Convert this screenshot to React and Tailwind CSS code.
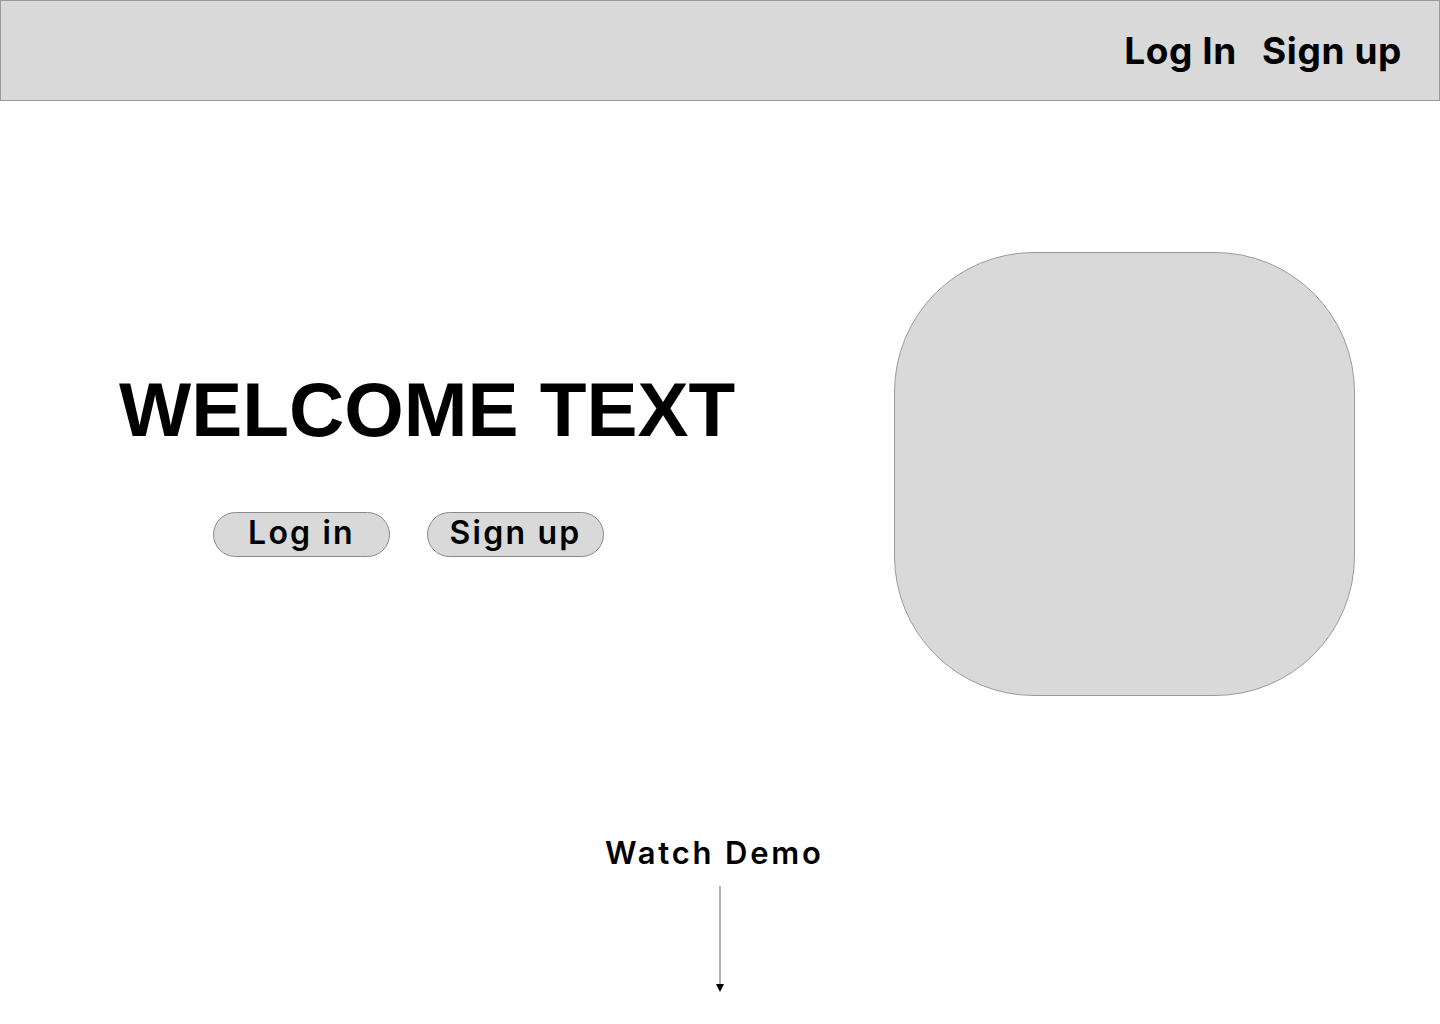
export default function App() {
  return (
    <div className="w-[1440px] h-[1024px] bg-white overflow-hidden">
      <header className="h-[101px] w-full border border-[#9a9a9a] bg-[#d9d9d9] flex items-center justify-end gap-[25px] pr-[37px] font-['Inter',sans-serif] font-bold text-[37px] leading-none text-black tracking-[0.6px]">
        <span>Log In</span>
        <span>Sign up</span>
      </header>
      <div className="flex h-[595px]">
        <div className="flex flex-col pl-[119px] pt-[271px]">
          <h1 className="font-['Liberation_Sans',Arial,sans-serif] font-bold text-[76.5px] leading-none text-black whitespace-nowrap">
            WELCOME TEXT
          </h1>
          <div className="flex gap-[37px] mt-[63px] ml-[94px] font-['Inter',sans-serif] font-semibold text-[32px] leading-none text-black tracking-[2.2px]">
            <button className="w-[177px] h-[45px] rounded-full border border-[#8a8a8a] bg-[#d9d9d9] flex items-center justify-center pb-[3px]">
              Log in
            </button>
            <button className="w-[177px] h-[45px] rounded-full border border-[#8a8a8a] bg-[#d9d9d9] flex items-center justify-center pb-[3px]">
              Sign up
            </button>
          </div>
        </div>
        <div className="ml-auto mr-[85px] mt-[151px] w-[461px] h-[444px] rounded-[140px] border border-[#9a9a9a] bg-[#d9d9d9]" />
      </div>
      <div className="flex flex-col pt-[141px]">
        <div className="pl-[605px] font-['Inter',sans-serif] font-semibold text-[31px] leading-none text-black tracking-[2.8px] whitespace-nowrap">
          Watch Demo
        </div>
        <svg className="ml-[715px] mt-[18px]" width="10" height="108" viewBox="0 0 10 108">
          <line x1="5" y1="0" x2="5" y2="100" stroke="#666" strokeWidth="1" />
          <polygon points="1,98 9,98 5,106" fill="#000" />
        </svg>
      </div>
    </div>
  );
}
